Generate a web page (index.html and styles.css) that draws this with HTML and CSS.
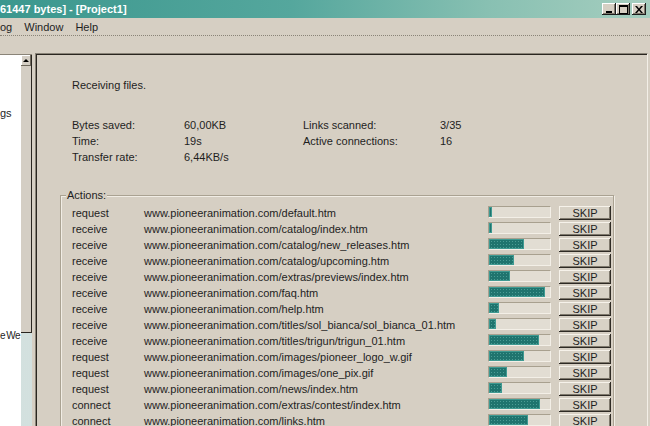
FILE: index.html
```html
<!DOCTYPE html>
<html>
<head>
<title>WinHTTrack - [Project1]</title>
<link rel="stylesheet" href="styles.css">
</head>
<body>
<div class="win">
  <div class="titlebar">
    <span class="title">61447 bytes] - [Project1]</span>
    <span class="tbtns">
      <span class="tb"><svg width="8" height="7" viewBox="0 0 8 7"><rect x="1" y="5" width="6" height="2" fill="#000"/></svg></span>
      <span class="tb"><svg width="9" height="9" viewBox="0 0 9 9"><rect x="0.5" y="0.5" width="8" height="8" fill="none" stroke="#000"/><rect x="0" y="0" width="9" height="2" fill="#000"/></svg></span>
      <span class="tb tb-close"><svg width="8" height="7" viewBox="0 0 8 7"><path d="M0 0h2l2 2.5 2-2.5h2l-3 3.5 3 3.5h-2l-2-2.5-2 2.5h-2l3-3.5z" fill="#000"/></svg></span>
    </span>
  </div>
  <div class="menubar"><span class="first">og</span><span>Window</span><span>Help</span></div>
  <div class="toolbar"></div>
  <div class="client">
    <div class="tree">
      <div class="tree-list">
        <div class="node node-a">gs</div>
        <div class="node node-b">e We</div>
      </div>
      <div class="tree-side">
        <div class="vscroll"><span class="sbtn"><span class="arrow-up"></span></span></div>
        <div class="corner"></div>
      </div>
    </div>
    <div class="panel">
      <div class="status">Receiving files.</div>
      <div class="stats">
        <span>Bytes saved:</span><span>60,00KB</span><span>Links scanned:</span><span>3/35</span>
        <span>Time:</span><span>19s</span><span>Active connections:</span><span>16</span>
        <span>Transfer rate:</span><span>6,44KB/s</span><span></span><span></span>
      </div>
      <fieldset class="actions">
        <legend>Actions:</legend>
        <div class="rows">
          <span>request</span><span>www.pioneeranimation.com/default.htm</span><span class="bar"><span class="fill" style="width:3px"></span></span><button class="skip">SKIP</button>
          <span>receive</span><span>www.pioneeranimation.com/catalog/index.htm</span><span class="bar"><span class="fill" style="width:3px"></span></span><button class="skip">SKIP</button>
          <span>receive</span><span>www.pioneeranimation.com/catalog/new_releases.htm</span><span class="bar"><span class="fill" style="width:35px"></span></span><button class="skip">SKIP</button>
          <span>receive</span><span>www.pioneeranimation.com/catalog/upcoming.htm</span><span class="bar"><span class="fill" style="width:25px"></span></span><button class="skip">SKIP</button>
          <span>receive</span><span>www.pioneeranimation.com/extras/previews/index.htm</span><span class="bar"><span class="fill" style="width:21px"></span></span><button class="skip">SKIP</button>
          <span>receive</span><span>www.pioneeranimation.com/faq.htm</span><span class="bar"><span class="fill" style="width:56px"></span></span><button class="skip">SKIP</button>
          <span>receive</span><span>www.pioneeranimation.com/help.htm</span><span class="bar"><span class="fill" style="width:10px"></span></span><button class="skip">SKIP</button>
          <span>receive</span><span>www.pioneeranimation.com/titles/sol_bianca/sol_bianca_01.htm</span><span class="bar"><span class="fill" style="width:7px"></span></span><button class="skip">SKIP</button>
          <span>receive</span><span>www.pioneeranimation.com/titles/trigun/trigun_01.htm</span><span class="bar"><span class="fill" style="width:50px"></span></span><button class="skip">SKIP</button>
          <span>request</span><span>www.pioneeranimation.com/images/pioneer_logo_w.gif</span><span class="bar"><span class="fill" style="width:35px"></span></span><button class="skip">SKIP</button>
          <span>request</span><span>www.pioneeranimation.com/images/one_pix.gif</span><span class="bar"><span class="fill" style="width:18px"></span></span><button class="skip">SKIP</button>
          <span>request</span><span>www.pioneeranimation.com/news/index.htm</span><span class="bar"><span class="fill" style="width:13px"></span></span><button class="skip">SKIP</button>
          <span>connect</span><span>www.pioneeranimation.com/extras/contest/index.htm</span><span class="bar"><span class="fill" style="width:51px"></span></span><button class="skip">SKIP</button>
          <span>connect</span><span>www.pioneeranimation.com/links.htm</span><span class="bar"><span class="fill" style="width:39px"></span></span><button class="skip">SKIP</button>
        </div>
      </fieldset>
    </div>
  </div>
</div>
</body>
</html>
```

FILE: styles.css
```css
* { box-sizing: border-box; }

body {
  margin: 0;
  background: #d6cfc3;
  font-family: "Liberation Sans", Arial, sans-serif;
  font-size: 11px;
  color: #1e1e1e;
}

.win {
  width: 650px; height: 426px;
  overflow: hidden;
  display: flex; flex-direction: column;
  background: #d6cfc3;
}

/* title bar */
.titlebar {
  height: 18px; flex: none;
  display: flex; align-items: center; justify-content: space-between;
  padding-right: 4px;
  background: linear-gradient(to right, #3b978e, #55a79d 45%, #88c0b2 75%, #a6cebf);
  color: #fff; font-weight: bold;
  white-space: nowrap;
}
.tbtns { display: flex; }
.tb {
  width: 14px; height: 12px;
  display: flex; align-items: center; justify-content: center;
  background: #d6cfc3;
  box-shadow: inset -1px -1px #1c1c1c, inset 1px 1px #fff, inset -2px -2px #7e786c;
}
.tb-close { margin-left: 2px; }

/* menu */
.menubar {
  height: 17px; flex: none;
  display: flex; align-items: center;
}
.menubar span { padding: 0 6px; }
.menubar .first { padding-left: 0; }

.toolbar {
  height: 18px; flex: none;
  border-top: 1px dotted #8a8478;
}

.client { flex: 1; display: flex; min-height: 0; }

/* tree on the left */
.tree {
  width: 32px; flex: none;
  display: flex;
  border-top: 1px solid #8a8478;
  margin-top: 1px;
}
.tree-list {
  width: 21px;
  background: #fff;
  overflow: hidden; white-space: nowrap;
  line-height: 16px;
}
.node-a { margin-top: 50px; }
.node-b {
  margin-top: 207px;
  font-size: 10px;
  letter-spacing: -0.5px; word-spacing: -1px;
}
.tree-side { width: 11px; display: flex; flex-direction: column; }
.vscroll {
  height: 278px;
  background: #d4cec4;
  border-right: 1px solid #2a2620;
  border-bottom: 1px solid #2a2620;
}
.sbtn {
  display: flex; align-items: center; justify-content: center;
  width: 10px; height: 11px;
  box-shadow: inset -1px -1px #6e685c, inset 1px 1px #fff;
}
.arrow-up {
  width: 0; height: 0;
  border-left: 3px solid transparent;
  border-right: 3px solid transparent;
  border-bottom: 3px solid #000;
}
.corner {
  flex: 1;
  background: #dde8e6;
  background-image: radial-gradient(circle, #c6d6d4 0.6px, transparent 0.8px);
  background-size: 2px 2px;
}

/* main panel */
.panel {
  flex: 1;
  margin-left: 3px; margin-right: 2px;
  border-top: 1px solid #8a8478;
  border-left: 1px solid #8a8478;
  border-right: 1px solid #f3efe7;
  box-shadow: inset 1px 1px #2a2620;
  padding: 23px 0 0 24px;
  line-height: 16px;
}
.status { margin-left: 12px; }
.stats {
  margin: 24px 0 0 12px;
  display: grid;
  grid-template-columns: 112px 119px 137px auto;
}

.actions {
  width: 554px;
  margin: 22px 0 0 0;
  padding: 2px 0 0 0;
  border: 1px solid #aaa292;
  box-shadow: inset 1px 1px #f1ede5, 1px 1px #f1ede5;
}
.actions legend {
  margin-left: 5px;
  padding: 0 1px;
  background: #d6cfc3;
}
.rows {
  padding-left: 11px;
  display: grid;
  grid-template-columns: 64px 336px 63px 52px;
  grid-auto-rows: 16px;
  column-gap: 8px;
  white-space: nowrap;
}

.bar {
  align-self: start;
  margin-top: 1px;
  height: 12px;
  display: flex;
  background: #e2ddd3;
  border-top: 1px solid #a8a08f;
  border-left: 1px solid #a8a08f;
  border-right: 1px solid #f3efe7;
  border-bottom: 1px solid #f3efe7;
}
.fill {
  height: 100%;
  background-color: #1f746e;
  background-image: radial-gradient(circle, #4a9c94 0.6px, transparent 0.9px);
  background-size: 3px 3px;
  border: 1px solid #3f9a92;
}

.skip {
  align-self: start;
  margin-top: 1px;
  height: 14px; width: 52px;
  padding: 0;
  font: 11px "Liberation Sans", Arial, sans-serif;
  color: #1e1e1e;
  background: #d8d2c6;
  border: none;
  box-shadow: inset -1px -1px #2e2a24, inset 1px 1px #f6f2ea, inset -2px -2px #7e786c;
}
```
